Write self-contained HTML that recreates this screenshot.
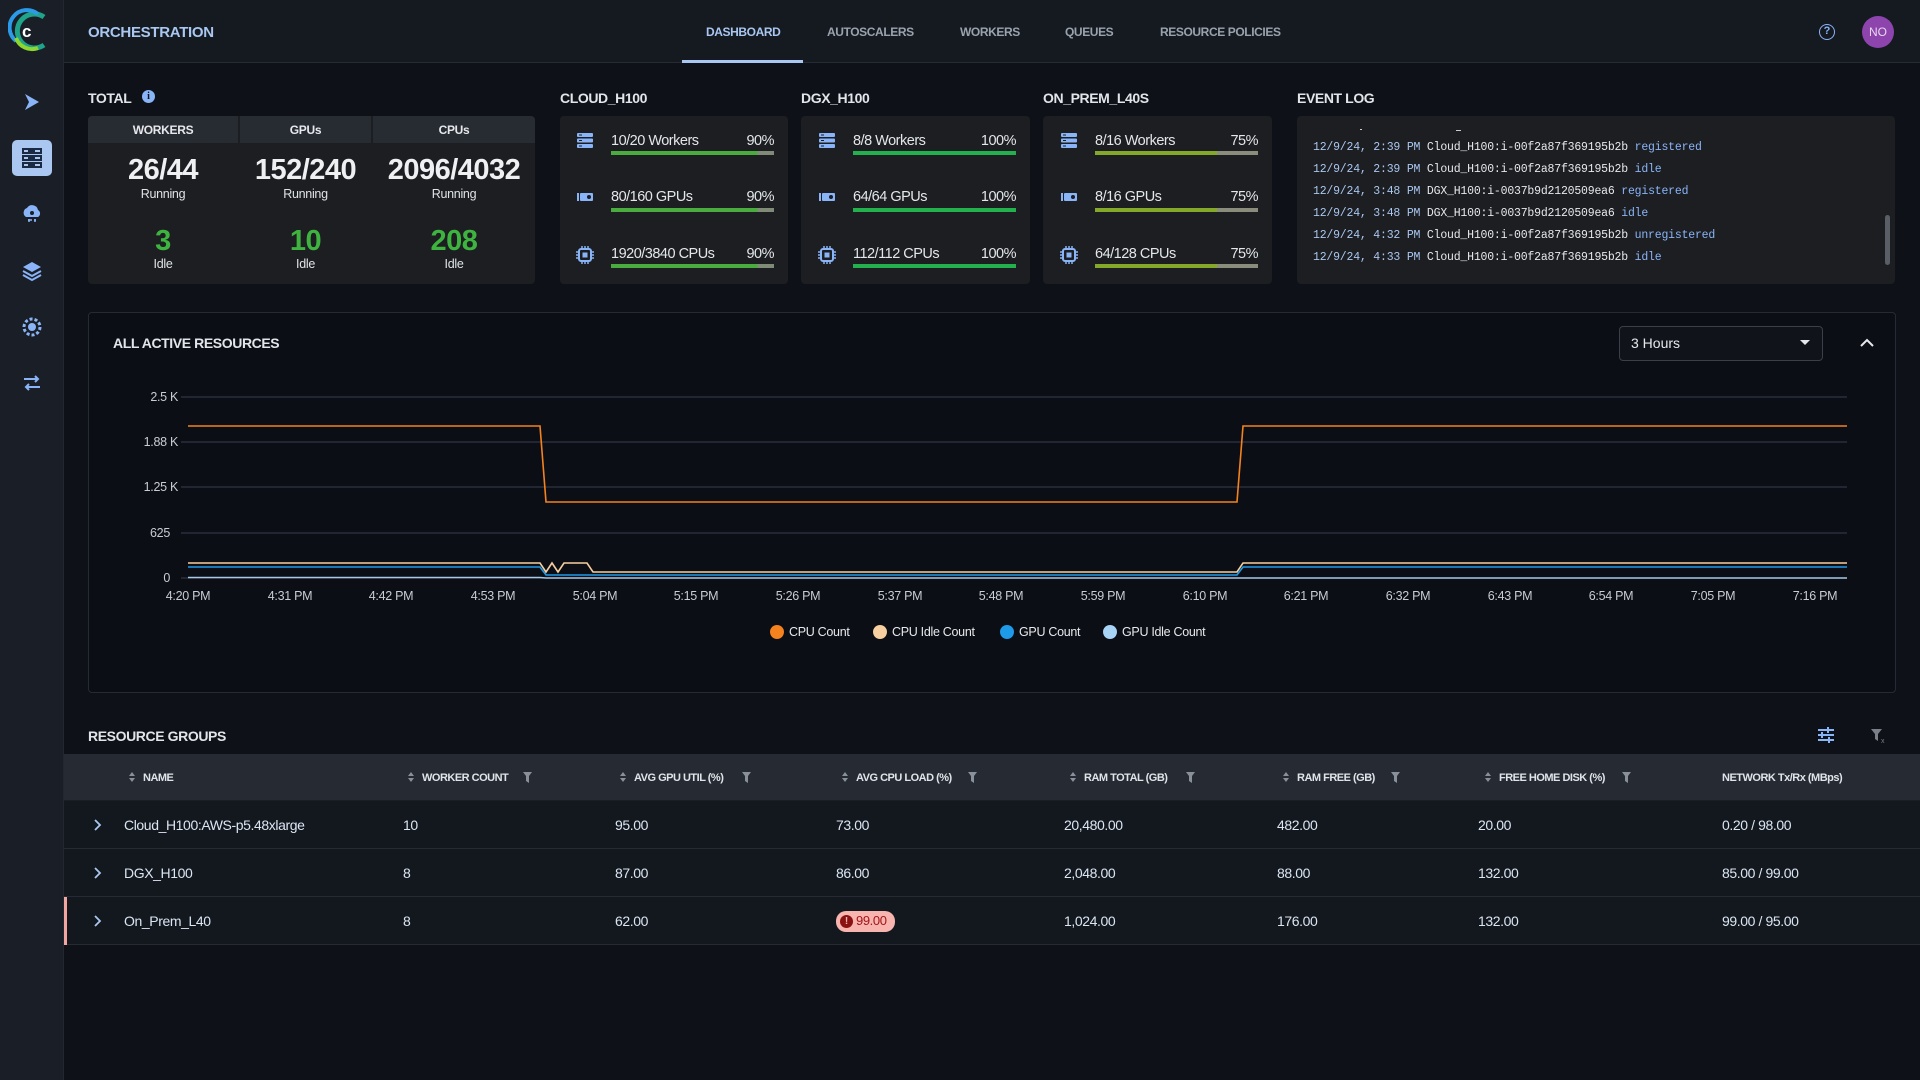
<!DOCTYPE html>
<html><head><meta charset="utf-8"><style>
*{box-sizing:border-box;margin:0;padding:0}
body{width:1920px;height:1080px;background:#0e1218;font-family:"Liberation Sans Narrow","Liberation Sans",sans-serif;color:#e6e8ec;position:relative;overflow:hidden}
.a{position:absolute}
.side{left:0;top:0;width:64px;height:1080px;background:#1a1f27;border-right:1px solid #232830}
.hdr{left:64px;top:0;width:1856px;height:63px;background:#151a21;border-bottom:1px solid #262b33}
.title{color:#a9c7f0;font-weight:bold;font-size:15px;letter-spacing:-0.3px}
.tab{font-size:12px;font-weight:bold;color:#9aa3ad;top:25px;letter-spacing:-0.4px}
.lbl{font-size:14px;font-weight:bold;color:#e2e6ea;letter-spacing:-0.4px}
.card{background:#1c1e21;border-radius:4px}
.th{background:#272b32;height:27px;top:116px;font-size:12px;font-weight:bold;text-align:center;line-height:28px;color:#e6e8ec;letter-spacing:-0.3px}
.big{font-size:29px;font-weight:bold;text-align:center;color:#eef0f2;letter-spacing:-0.5px}
.sm{font-size:12.5px;text-align:center;color:#e0e3e6;letter-spacing:-0.3px}
.grn{color:#3fb33f}
.rt{font-size:14.5px;color:#e3e6ea;letter-spacing:-0.5px}
.bar{height:4px}
.ev{font-family:"Liberation Mono",monospace;font-size:11.5px;left:1313px;white-space:pre;letter-spacing:-0.2px}
.ts{color:#a9c7f0}.st{color:#8ab4f8}
.col{font-size:11px;font-weight:bold;color:#dfe4ea;top:772px;letter-spacing:-0.5px}
.cell{font-size:14px;color:#dbe6f3;letter-spacing:-0.4px}
</style></head><body>
<div class="a side"></div>
<svg class="a" style="left:8px;top:8px" width="44" height="46" viewBox="0 0 44 46">
<path d="M36 9 A17 17 0 1 0 36 37" fill="none" stroke="#1fa38a" stroke-width="5"/>
<path d="M30 6 A17 17 0 0 0 8 33" fill="none" stroke="#2b9be8" stroke-width="4"/>
<path d="M8 30 A17 17 0 0 0 30 40" fill="none" stroke="#8ed630" stroke-width="4"/>
<text x="14" y="29" font-family="Liberation Sans" font-weight="bold" font-size="17" fill="#fff">c</text>
</svg>
<svg class="a" style="left:22px;top:92px" width="20" height="20" viewBox="0 0 20 20"><path d="M3 2 L17 10 L3 18 L7 10Z" fill="#8ab4f8"/></svg>
<div class="a" style="left:12px;top:140px;width:40px;height:36px;background:#a9c7f0;border-radius:5px"></div>
<svg class="a" style="left:21px;top:147px" width="22" height="22" viewBox="0 0 22 22"><rect x="1" y="1" width="20" height="6" fill="#1a2a44"/><rect x="1" y="8" width="20" height="6" fill="#1a2a44"/><rect x="1" y="15" width="20" height="6" fill="#1a2a44"/><rect x="3" y="3" width="4" height="2" fill="#a9c7f0"/><rect x="3" y="10" width="4" height="2" fill="#a9c7f0"/><rect x="3" y="17" width="4" height="2" fill="#a9c7f0"/><rect x="14" y="3" width="5" height="2" fill="#a9c7f0"/><rect x="14" y="10" width="5" height="2" fill="#a9c7f0"/><rect x="14" y="17" width="5" height="2" fill="#a9c7f0"/></svg>
<svg class="a" style="left:21px;top:203px" width="22" height="22" viewBox="0 0 22 22"><path d="M5 14 A5 5 0 0 1 6 5 A6 6 0 0 1 17 7 A4 4 0 0 1 17 14Z" fill="#8ab4f8"/><circle cx="11" cy="10" r="2" fill="#1a1f27"/><path d="M7 17h4M15 17h-2M8 19v-3M14 19v-3" stroke="#8ab4f8" stroke-width="1.5"/></svg>
<svg class="a" style="left:21px;top:260px" width="22" height="22" viewBox="0 0 22 22"><path d="M11 2 L20 7 L11 12 L2 7Z" fill="#8ab4f8"/><path d="M2 11 L11 16 L20 11 M2 15 L11 20 L20 15" fill="none" stroke="#8ab4f8" stroke-width="2"/></svg>
<svg class="a" style="left:21px;top:316px" width="22" height="22" viewBox="0 0 22 22"><circle cx="11" cy="11" r="8" fill="none" stroke="#8ab4f8" stroke-width="3" stroke-dasharray="3 2"/><circle cx="11" cy="11" r="4" fill="#8ab4f8"/></svg>
<svg class="a" style="left:21px;top:372px" width="22" height="22" viewBox="0 0 22 22"><path d="M3 7 H17 M14 4 L17 7 L14 10 M19 15 H5 M8 12 L5 15 L8 18" fill="none" stroke="#8ab4f8" stroke-width="2"/></svg>

<div class="a hdr"></div>
<div class="a title" style="left:88px;top:24px">ORCHESTRATION</div>
<div class="a tab" style="left:706px;color:#a9c7f0">DASHBOARD</div>
<div class="a tab" style="left:827px">AUTOSCALERS</div>
<div class="a tab" style="left:960px">WORKERS</div>
<div class="a tab" style="left:1065px">QUEUES</div>
<div class="a tab" style="left:1160px">RESOURCE POLICIES</div>
<div class="a" style="left:682px;top:60px;width:121px;height:3px;background:#a9c7f0"></div>
<div class="a" style="left:1819px;top:24px;width:16px;height:16px;border:1.5px solid #8ab4f8;border-radius:50%;color:#8ab4f8;font-size:11px;font-weight:bold;text-align:center;line-height:13px;font-family:'Liberation Sans'">?</div>
<div class="a" style="left:1862px;top:16px;width:32px;height:32px;border-radius:50%;background:#8e44ad;color:#e8d8f0;font-size:12px;text-align:center;line-height:32px">NO</div>

<div class="a lbl" style="left:88px;top:90px">TOTAL</div>
<div class="a" style="left:142px;top:90px;width:13px;height:13px;border-radius:50%;background:#8ab4f8;color:#0e1218;font-size:10px;font-weight:bold;text-align:center;line-height:13px;font-family:'Liberation Serif'">i</div>
<div class="a card" style="left:88px;top:116px;width:447px;height:168px"></div>
<div class="a th" style="left:88px;width:150px;border-radius:4px 0 0 0">WORKERS</div>
<div class="a th" style="left:240px;width:131px">GPUs</div>
<div class="a th" style="left:373px;width:162px;border-radius:0 4px 0 0">CPUs</div>
<div class="a big" style="left:88px;width:150px;top:154px">26/44</div>
<div class="a big" style="left:240px;width:131px;top:154px">152/240</div>
<div class="a big" style="left:373px;width:162px;top:154px">2096/4032</div>
<div class="a sm" style="left:88px;width:150px;top:187px">Running</div>
<div class="a sm" style="left:240px;width:131px;top:187px">Running</div>
<div class="a sm" style="left:373px;width:162px;top:187px">Running</div>
<div class="a big grn" style="left:88px;width:150px;top:225px">3</div>
<div class="a big grn" style="left:240px;width:131px;top:225px">10</div>
<div class="a big grn" style="left:373px;width:162px;top:225px">208</div>
<div class="a sm" style="left:88px;width:150px;top:257px">Idle</div>
<div class="a sm" style="left:240px;width:131px;top:257px">Idle</div>
<div class="a sm" style="left:373px;width:162px;top:257px">Idle</div>

<div class="a lbl" style="left:560px;top:90px">CLOUD_H100</div>
<div class="a lbl" style="left:801px;top:90px">DGX_H100</div>
<div class="a lbl" style="left:1043px;top:90px">ON_PREM_L40S</div>
<div class="a card" style="left:560px;top:116px;width:228px;height:168px"></div>
<div class="a card" style="left:801px;top:116px;width:229px;height:168px"></div>
<div class="a card" style="left:1043px;top:116px;width:229px;height:168px"></div>

<svg width="0" height="0" style="position:absolute"><defs>
<g id="isrv"><rect x="0" y="0" width="16" height="4" rx="1" fill="#8ab4f8"/><rect x="0" y="5.5" width="16" height="4" rx="1" fill="#8ab4f8"/><rect x="0" y="11" width="16" height="4" rx="1" fill="#8ab4f8"/><rect x="2" y="1.5" width="3" height="1" fill="#1c1e21"/><rect x="2" y="7" width="3" height="1" fill="#1c1e21"/><rect x="2" y="12.5" width="3" height="1" fill="#1c1e21"/></g>
<g id="igpu"><rect x="0" y="3" width="2" height="8" fill="#8ab4f8"/><rect x="3" y="3" width="13" height="8" rx="1" fill="#8ab4f8"/><circle cx="12" cy="7" r="2" fill="#1c1e21"/></g>
<g id="icpu"><rect x="3" y="3" width="12" height="12" rx="2" fill="none" stroke="#8ab4f8" stroke-width="2"/><rect x="6.5" y="6.5" width="5" height="5" fill="#8ab4f8"/><path d="M6 0v3M9 0v3M12 0v3M6 15v3M9 15v3M12 15v3M0 6h3M0 9h3M0 12h3M15 6h3M15 9h3M15 12h3" stroke="#8ab4f8" stroke-width="1.5"/></g>
</defs></svg>

<svg class="a" style="left:577px;top:133px" width="18" height="18"><use href="#isrv"/></svg>
<svg class="a" style="left:577px;top:190px" width="18" height="18"><use href="#igpu"/></svg>
<svg class="a" style="left:576px;top:246px" width="18" height="18"><use href="#icpu"/></svg>
<div class="a rt" style="left:611px;top:133px">10/20 Workers</div><div class="a rt" style="left:730px;width:44px;text-align:right;top:133px">90%</div>
<div class="a bar" style="left:611px;top:151px;width:163px;background:linear-gradient(90deg,#4aab3e 90%,#7f8b76 90%)"></div>
<div class="a rt" style="left:611px;top:189px">80/160 GPUs</div><div class="a rt" style="left:730px;width:44px;text-align:right;top:189px">90%</div>
<div class="a bar" style="left:611px;top:208px;width:163px;background:linear-gradient(90deg,#4aab3e 90%,#7f8b76 90%)"></div>
<div class="a rt" style="left:611px;top:246px">1920/3840 CPUs</div><div class="a rt" style="left:730px;width:44px;text-align:right;top:246px">90%</div>
<div class="a bar" style="left:611px;top:264px;width:163px;background:linear-gradient(90deg,#4aab3e 90%,#7f8b76 90%)"></div>
<svg class="a" style="left:819px;top:133px" width="18" height="18"><use href="#isrv"/></svg>
<svg class="a" style="left:819px;top:190px" width="18" height="18"><use href="#igpu"/></svg>
<svg class="a" style="left:818px;top:246px" width="18" height="18"><use href="#icpu"/></svg>
<div class="a rt" style="left:853px;top:133px">8/8 Workers</div><div class="a rt" style="left:966px;width:50px;text-align:right;top:133px">100%</div>
<div class="a bar" style="left:853px;top:151px;width:163px;background:#22b14c"></div>
<div class="a rt" style="left:853px;top:189px">64/64 GPUs</div><div class="a rt" style="left:966px;width:50px;text-align:right;top:189px">100%</div>
<div class="a bar" style="left:853px;top:208px;width:163px;background:#22b14c"></div>
<div class="a rt" style="left:853px;top:246px">112/112 CPUs</div><div class="a rt" style="left:966px;width:50px;text-align:right;top:246px">100%</div>
<div class="a bar" style="left:853px;top:264px;width:163px;background:#22b14c"></div>
<svg class="a" style="left:1061px;top:133px" width="18" height="18"><use href="#isrv"/></svg>
<svg class="a" style="left:1061px;top:190px" width="18" height="18"><use href="#igpu"/></svg>
<svg class="a" style="left:1060px;top:246px" width="18" height="18"><use href="#icpu"/></svg>
<div class="a rt" style="left:1095px;top:133px">8/16 Workers</div><div class="a rt" style="left:1214px;width:44px;text-align:right;top:133px">75%</div>
<div class="a bar" style="left:1095px;top:151px;width:163px;background:linear-gradient(90deg,#84a82a 75%,#8a8d7c 75%)"></div>
<div class="a rt" style="left:1095px;top:189px">8/16 GPUs</div><div class="a rt" style="left:1214px;width:44px;text-align:right;top:189px">75%</div>
<div class="a bar" style="left:1095px;top:208px;width:163px;background:linear-gradient(90deg,#84a82a 75%,#8a8d7c 75%)"></div>
<div class="a rt" style="left:1095px;top:246px">64/128 CPUs</div><div class="a rt" style="left:1214px;width:44px;text-align:right;top:246px">75%</div>
<div class="a bar" style="left:1095px;top:264px;width:163px;background:linear-gradient(90deg,#84a82a 75%,#8a8d7c 75%)"></div>

<div class="a lbl" style="left:1297px;top:90px">EVENT LOG</div>
<div class="a card" style="left:1297px;top:116px;width:598px;height:168px"></div>
<div class="a" style="left:1360px;top:129px;width:2px;height:1px;background:#ccc"></div>
<div class="a" style="left:1456px;top:130px;width:5px;height:1px;background:#ccc"></div>
<div class="a ev" style="top:141px"><span class="ts">12/9/24, 2:39 PM</span> Cloud_H100:i-00f2a87f369195b2b <span class="st">registered</span></div>
<div class="a ev" style="top:163px"><span class="ts">12/9/24, 2:39 PM</span> Cloud_H100:i-00f2a87f369195b2b <span class="st">idle</span></div>
<div class="a ev" style="top:185px"><span class="ts">12/9/24, 3:48 PM</span> DGX_H100:i-0037b9d2120509ea6 <span class="st">registered</span></div>
<div class="a ev" style="top:207px"><span class="ts">12/9/24, 3:48 PM</span> DGX_H100:i-0037b9d2120509ea6 <span class="st">idle</span></div>
<div class="a ev" style="top:229px"><span class="ts">12/9/24, 4:32 PM</span> Cloud_H100:i-00f2a87f369195b2b <span class="st">unregistered</span></div>
<div class="a ev" style="top:251px"><span class="ts">12/9/24, 4:33 PM</span> Cloud_H100:i-00f2a87f369195b2b <span class="st">idle</span></div>
<div class="a" style="left:1885px;top:215px;width:5px;height:50px;background:#5a5e66;border-radius:3px"></div>

<div class="a" style="left:88px;top:312px;width:1808px;height:381px;background:#0b0e14;border:1px solid #262a32;border-radius:4px"></div>
<div class="a lbl" style="left:113px;top:335px">ALL ACTIVE RESOURCES</div>
<div class="a" style="left:1619px;top:326px;width:204px;height:35px;border:1px solid #3a3f48;border-radius:4px;background:#10141a;font-family:'Liberation Sans';font-size:14px;line-height:33px;padding-left:11px;color:#e6e8ec">3 Hours</div>
<svg class="a" style="left:1800px;top:340px" width="10" height="6"><path d="M0 0H10L5 5Z" fill="#e6e8ec"/></svg>
<svg class="a" style="left:1860px;top:338px" width="14" height="9"><path d="M1 8L7 2L13 8" fill="none" stroke="#e6e8ec" stroke-width="2"/></svg>

<svg class="a" style="left:88px;top:312px" width="1808" height="381" viewBox="88 312 1808 381" font-family="Liberation Sans" font-size="12.5" fill="#c9ccd2">
<g stroke="#3a3f52" stroke-width="1">
<line x1="181" y1="397" x2="1847" y2="397"/><line x1="181" y1="442" x2="1847" y2="442"/><line x1="181" y1="487" x2="1847" y2="487"/><line x1="181" y1="533" x2="1847" y2="533"/><line x1="181" y1="578" x2="1847" y2="578"/></g>
<g text-anchor="end" letter-spacing="-0.3"><text x="178" y="401">2.5 K</text><text x="178" y="446">1.88 K</text><text x="178" y="491">1.25 K</text><text x="170" y="537">625</text><text x="170" y="582">0</text></g>
<g text-anchor="middle" letter-spacing="-0.3">
<text x="188" y="600">4:20 PM</text><text x="290" y="600">4:31 PM</text><text x="391" y="600">4:42 PM</text><text x="493" y="600">4:53 PM</text><text x="595" y="600">5:04 PM</text><text x="696" y="600">5:15 PM</text><text x="798" y="600">5:26 PM</text><text x="900" y="600">5:37 PM</text><text x="1001" y="600">5:48 PM</text><text x="1103" y="600">5:59 PM</text><text x="1205" y="600">6:10 PM</text><text x="1306" y="600">6:21 PM</text><text x="1408" y="600">6:32 PM</text><text x="1510" y="600">6:43 PM</text><text x="1611" y="600">6:54 PM</text><text x="1713" y="600">7:05 PM</text><text x="1815" y="600">7:16 PM</text></g>
<g fill="none" stroke-width="1.6">
<path d="M188 577.5 H540 L546 578 H1847" stroke="#a7c8e6"/>
<path d="M188 567 H540 L546 575 H1237 L1243 567 H1847" stroke="#1e9be8"/>
<path d="M188 563 H540 L546 572 L552 563 L558 572 L564 563 H587 L593 572 H1237 L1243 563 H1847" stroke="#f8cfa0"/>
<path d="M188 426 H540 L546 502 H1237 L1243 426 H1847" stroke="#f5821f"/>
</g>
<g font-size="12.5" fill="#e6e8ec" letter-spacing="-0.3">
<circle cx="777" cy="632" r="7" fill="#f5821f"/><text x="789" y="636">CPU Count</text>
<circle cx="880" cy="632" r="7" fill="#f8cfa0"/><text x="892" y="636">CPU Idle Count</text>
<circle cx="1007" cy="632" r="7" fill="#1e9be8"/><text x="1019" y="636">GPU Count</text>
<circle cx="1110" cy="632" r="7" fill="#a7d3f5"/><text x="1122" y="636">GPU Idle Count</text>
</g></svg>

<div class="a lbl" style="left:88px;top:728px">RESOURCE GROUPS</div>
<svg class="a" style="left:1817px;top:727px" width="18" height="16"><path d="M1 3H17M1 8H17M1 13H17" stroke="#8ab4f8" stroke-width="2"/><path d="M11 0v6M5 5v6M12 10v6" stroke="#8ab4f8" stroke-width="2"/></svg>
<svg class="a" style="left:1870px;top:728px" width="16" height="16"><path d="M1 1H12L8 6V13L5 11V6Z" fill="#7a7f88"/><text x="11" y="15" font-size="7" fill="#7a7f88" font-family="Liberation Sans">x</text></svg>
<div class="a" style="left:64px;top:754px;width:1856px;height:47px;background:#262a32;border-bottom:1px solid #1a1d23"></div>
<div class="a" style="left:64px;top:801px;width:1856px;height:144px;background:#13171e"></div>
<div class="a" style="left:64px;top:848px;width:1856px;height:1px;background:#262a32"></div>
<div class="a" style="left:64px;top:896px;width:1856px;height:1px;background:#262a32"></div>
<div class="a" style="left:64px;top:944px;width:1856px;height:1px;background:#262a32"></div>
<div class="a" style="left:64px;top:897px;width:3px;height:48px;background:#f3a6a0"></div>

<svg width="0" height="0" style="position:absolute"><defs><g id="so"><path d="M0 4L3 0L6 4Z M0 6L3 10L6 6Z" fill="#8a9099"/></g><g id="fi"><path d="M0 0H9L6 4V11L3 9V4Z" fill="#8a9099"/></g></defs></svg>
<svg class="a" style="left:129px;top:772px" width="6" height="10"><use href="#so"/></svg><div class="a col" style="left:143px">NAME</div>
<svg class="a" style="left:408px;top:772px" width="6" height="10"><use href="#so"/></svg><div class="a col" style="left:422px">WORKER COUNT</div><svg class="a" style="left:523px;top:772px" width="9" height="11"><use href="#fi"/></svg>
<svg class="a" style="left:620px;top:772px" width="6" height="10"><use href="#so"/></svg><div class="a col" style="left:634px">AVG GPU UTIL (%)</div><svg class="a" style="left:742px;top:772px" width="9" height="11"><use href="#fi"/></svg>
<svg class="a" style="left:842px;top:772px" width="6" height="10"><use href="#so"/></svg><div class="a col" style="left:856px">AVG CPU LOAD (%)</div><svg class="a" style="left:968px;top:772px" width="9" height="11"><use href="#fi"/></svg>
<svg class="a" style="left:1070px;top:772px" width="6" height="10"><use href="#so"/></svg><div class="a col" style="left:1084px">RAM TOTAL (GB)</div><svg class="a" style="left:1186px;top:772px" width="9" height="11"><use href="#fi"/></svg>
<svg class="a" style="left:1283px;top:772px" width="6" height="10"><use href="#so"/></svg><div class="a col" style="left:1297px">RAM FREE (GB)</div><svg class="a" style="left:1391px;top:772px" width="9" height="11"><use href="#fi"/></svg>
<svg class="a" style="left:1485px;top:772px" width="6" height="10"><use href="#so"/></svg><div class="a col" style="left:1499px">FREE HOME DISK (%)</div><svg class="a" style="left:1622px;top:772px" width="9" height="11"><use href="#fi"/></svg>
<div class="a col" style="left:1722px">NETWORK Tx/Rx (MBps)</div>

<svg class="a" style="left:94px;top:819px" width="8" height="12"><path d="M1 1L6 6L1 11" fill="none" stroke="#a9c7f0" stroke-width="1.8"/></svg>
<svg class="a" style="left:94px;top:867px" width="8" height="12"><path d="M1 1L6 6L1 11" fill="none" stroke="#a9c7f0" stroke-width="1.8"/></svg>
<svg class="a" style="left:94px;top:915px" width="8" height="12"><path d="M1 1L6 6L1 11" fill="none" stroke="#a9c7f0" stroke-width="1.8"/></svg>
<div class="a cell" style="left:124px;top:817px">Cloud_H100:AWS-p5.48xlarge</div>
<div class="a cell" style="left:403px;top:817px">10</div>
<div class="a cell" style="left:615px;top:817px">95.00</div>
<div class="a cell" style="left:836px;top:817px">73.00</div>
<div class="a cell" style="left:1064px;top:817px">20,480.00</div>
<div class="a cell" style="left:1277px;top:817px">482.00</div>
<div class="a cell" style="left:1478px;top:817px">20.00</div>
<div class="a cell" style="left:1722px;top:817px">0.20 / 98.00</div>

<div class="a cell" style="left:124px;top:865px">DGX_H100</div>
<div class="a cell" style="left:403px;top:865px">8</div>
<div class="a cell" style="left:615px;top:865px">87.00</div>
<div class="a cell" style="left:836px;top:865px">86.00</div>
<div class="a cell" style="left:1064px;top:865px">2,048.00</div>
<div class="a cell" style="left:1277px;top:865px">88.00</div>
<div class="a cell" style="left:1478px;top:865px">132.00</div>
<div class="a cell" style="left:1722px;top:865px">85.00 / 99.00</div>

<div class="a cell" style="left:124px;top:913px">On_Prem_L40</div>
<div class="a cell" style="left:403px;top:913px">8</div>
<div class="a cell" style="left:615px;top:913px">62.00</div>
<div class="a" style="left:836px;top:911px;width:59px;height:21px;background:#f8b4ae;border-radius:10px"></div>
<div class="a" style="left:840px;top:915px;width:13px;height:13px;border-radius:50%;background:#8b1212;color:#f8b4ae;font-size:10px;font-weight:bold;text-align:center;line-height:13px;font-family:'Liberation Sans'">!</div>
<div class="a cell" style="left:856px;top:913px;color:#a3161a;font-size:13px">99.00</div>
<div class="a cell" style="left:1064px;top:913px">1,024.00</div>
<div class="a cell" style="left:1277px;top:913px">176.00</div>
<div class="a cell" style="left:1478px;top:913px">132.00</div>
<div class="a cell" style="left:1722px;top:913px">99.00 / 95.00</div>
</body></html>
